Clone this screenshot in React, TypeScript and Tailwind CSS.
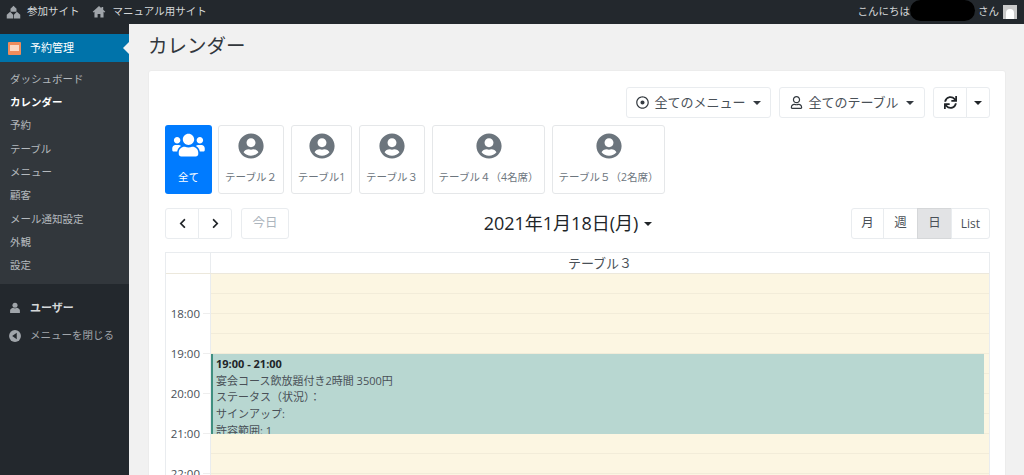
import { FaChevronLeft, FaChevronRight, FaRegDotCircle, FaRegUser, FaSync, FaUserCircle, FaUsers } from "react-icons/fa";

const font = "font-['Open_Sans','Noto_Sans_CJK_JP',sans-serif]";

const subMenu = ["ダッシュボード", "カレンダー", "予約", "テーブル", "メニュー", "顧客", "メール通知設定", "外観", "設定"];

const tables = [
  { label: "テーブル２", width: "w-[66px]" },
  { label: "テーブル1", width: "w-[61px]" },
  { label: "テーブル３", width: "w-[66px]" },
  { label: "テーブル４（4名席）", width: "w-[113px]" },
  { label: "テーブル５（2名席）", width: "w-[113px]" },
];

const hours = ["", "", "18:00", "", "19:00", "", "20:00", "", "21:00", "", "22:00"];

function HomeIcon({ className }: { className: string }) {
  return (
    <svg viewBox="0 0 20 20" fill="currentColor" className={className}>
      <path d="M10 1.500 1 9.500l1 1.200 1.500-1.200V18h4.500v-5h4v5h4.500V9.500l1.500 1.200 1-1.200-3-2.700V3h-2.500v1.600z" />
    </svg>
  );
}

function SitesIcon({ className }: { className: string }) {
  return (
    <svg viewBox="0 0 20 20" fill="currentColor" className={className}>
      <path d="M10 1 6 5v4h8V5z" />
      <path d="M5.500 9 1 13v5h8.500v-5zM14.500 9 10.500 13v5H19v-5z" />
    </svg>
  );
}

function CollapseIcon({ className }: { className: string }) {
  return (
    <svg viewBox="0 0 20 20" className={className}>
      <circle cx="10" cy="10" r="8.500" fill="currentColor" />
      <path d="M12.500 5.500v9L6 10z" fill="#23282d" />
    </svg>
  );
}

function WpUserIcon({ className }: { className: string }) {
  return (
    <svg viewBox="0 0 20 20" fill="currentColor" className={className}>
      <circle cx="10" cy="6" r="3.600" />
      <path d="M3 17v-3.500C3 11 5.500 10 7.500 9.500c1.500 1 3.500 1 5 0 2 .5 4.500 1.500 4.500 4V17z" />
    </svg>
  );
}

function Caret({ className = "" }: { className?: string }) {
  return <span className={`inline-block border-x-[4px] border-t-[4px] border-x-transparent border-t-current ${className}`} />;
}

function Sidebar() {
  return (
    <aside className="w-[129px] shrink-0 bg-[#23282d] pt-[10px] text-[#b4b9be]">
      <div className="relative flex h-[28px] items-center gap-[9px] bg-[#0073aa] pl-[8px] text-[11px] text-white">
        <span className="flex h-[13px] w-[13px] items-center justify-center rounded-[1px] bg-[#ee8c5c]">
          <span className="h-[6px] w-[9px] bg-[#fbd9c4]" />
        </span>
        予約管理
        <span className="absolute right-0 top-[8px] border-y-[6px] border-r-[6px] border-y-transparent border-r-[#f1f1f1]" />
      </div>
      <ul className="flex h-[222px] flex-col bg-[#32373c] pl-[10px] pt-[6px] text-[10.500px]">
        {subMenu.map((item) => (
          <li key={item} className={`flex h-[23.300px] items-center ${item === "カレンダー" ? "font-bold text-white" : ""}`}>
            {item}
          </li>
        ))}
      </ul>
      <div className="mt-[13px] flex h-[22px] items-center gap-[8px] pl-[8px] text-[11px] font-bold text-[#d5d8da]">
        <WpUserIcon className="h-[14px] w-[14px] text-[#a0a5aa]" />
        ユーザー
      </div>
      <div className="mt-[6px] flex h-[22px] items-center gap-[8px] pl-[8px] text-[10.500px] text-[#a0a5aa]">
        <CollapseIcon className="h-[14px] w-[14px]" />
        メニューを閉じる
      </div>
    </aside>
  );
}

function Toolbar() {
  const btn = "flex h-[31px] items-center justify-center rounded-[3px] border border-[#e9ecef] bg-white text-[#495057]";
  return (
    <div className="flex justify-end gap-[8px] pr-[15px]">
      <button className={`${btn} w-[145px] gap-[5px] text-[13px]`}>
        <FaRegDotCircle className="h-[13px] w-[13px] text-[#343a40]" />
        全てのメニュー
        <Caret className="ml-[2px] text-[#343a40]" />
      </button>
      <button className={`${btn} w-[146px] gap-[5px] text-[13px]`}>
        <FaRegUser className="h-[13px] w-[13px] text-[#343a40]" />
        全てのテーブル
        <Caret className="ml-[2px] text-[#343a40]" />
      </button>
      <div className="flex">
        <button className={`${btn} w-[34px] rounded-r-none`}>
          <FaSync className="h-[13px] w-[13px] text-[#212529]" />
        </button>
        <button className={`${btn} -ml-px w-[24px] rounded-l-none`}>
          <Caret className="text-[#212529]" />
        </button>
      </div>
    </div>
  );
}

function TableTabs() {
  return (
    <div className="mt-[7px] flex gap-[6px] pl-[16px]">
      <div className="flex h-[69px] w-[47px] flex-col items-center rounded-[3px] bg-[#007bff] pt-[7px] text-[10.500px] text-white">
        <FaUsers className="h-[26px] w-[33px]" />
        <span className="mt-[11px] leading-[16px]">全て</span>
      </div>
      {tables.map((t) => (
        <div key={t.label} className={`mr-px flex h-[69px] ${t.width} flex-col items-center rounded-[3px] border border-[#e5e7e9] bg-white pt-[7px] text-[10.500px] text-[#6c757d]`}>
          <FaUserCircle className="h-[26px] w-[26px]" />
          <span className="mt-[10px] whitespace-nowrap leading-[16px]">{t.label}</span>
        </div>
      ))}
    </div>
  );
}

function CalendarHeader() {
  const btn = "flex h-[31px] items-center justify-center border";
  return (
    <div className="mt-[14px] flex items-center justify-between pl-[16px] pr-[15px]">
      <div className="flex w-[124px] items-center">
        <button className={`${btn} w-[34px] rounded-l-[3px] border-[#e9ecef] bg-white text-[#212529]`}>
          <FaChevronLeft className="h-[11px] w-[11px]" />
        </button>
        <button className={`${btn} -ml-px w-[34px] rounded-r-[3px] border-[#e9ecef] bg-white text-[#212529]`}>
          <FaChevronRight className="h-[11px] w-[11px]" />
        </button>
        <button className={`${btn} ml-[9px] w-[48px] shrink-0 rounded-[3px] border-[#e9ecef] bg-white text-[12.500px] text-[#adb5bd]`}>今日</button>
      </div>
      <div className="mr-[4px] flex items-center gap-[6px] text-[18px] leading-[31px] text-[#212529]">
        2021年1月18日(月)
        <Caret />
      </div>
      <div className="flex">
        <button className={`${btn} w-[33px] rounded-l-[3px] border-[#e9ecef] bg-white text-[12.500px] text-[#495057]`}>月</button>
        <button className={`${btn} -ml-px w-[35px] border-[#e9ecef] bg-white text-[12.500px] text-[#495057]`}>週</button>
        <button className={`${btn} -ml-px w-[35px] border-[#d5d7d9] bg-[#e2e3e5] text-[12.500px] text-[#495057]`}>日</button>
        <button className={`${btn} -ml-px w-[39px] rounded-r-[3px] border-[#e9ecef] bg-white text-[12px] text-[#495057]`}>List</button>
      </div>
    </div>
  );
}

function TimeGrid() {
  return (
    <div className="ml-[16px] mr-[15px] mt-[13px] border-x border-t border-[#e9ecef]">
      <div className="flex h-[21px] border-b border-[#ece8dc]">
        <div className="w-[45px] border-r border-[#e9ecef]" />
        <div className="flex-1 text-center text-[13px] leading-[20px] text-[#495057]">テーブル３</div>
      </div>
      <div className="relative">
        {hours.map((label, i) => (
          <div key={i} className="flex h-[20px]">
            <div className="relative w-[45px] border-r border-[#e9ecef]">
              {label && (
                <>
                  <span className="absolute right-[10px] top-[-10px] text-[11.500px] leading-[20px] text-[#495057]">{label}</span>
                  <span className="absolute right-0 top-[-1px] h-px w-[7px] bg-[#eeeeee]" />
                </>
              )}
            </div>
            <div className="flex-1 border-b border-[#f2ecd9] bg-[#fcf6e2]" />
          </div>
        ))}
        <div className="absolute left-[45px] right-[5px] top-[80px] h-[80px] overflow-hidden border-l-[2px] border-[#3f8f7f] bg-[#b8d7d1] pl-[3px] pt-[2px] text-[11px] leading-[16.700px] text-[#495057]">
          <div className="font-bold text-[#212529]">19:00 - 21:00</div>
          <div>宴会コース飲放題付き2時間 3500円</div>
          <div>ステータス（状況）：</div>
          <div>サインアップ:</div>
          <div>許容範囲: 1</div>
        </div>
      </div>
    </div>
  );
}

export default function App() {
  return (
    <div className={`flex h-screen flex-col overflow-hidden bg-[#f1f1f1] ${font}`}>
      <header className="flex h-[24px] shrink-0 items-center bg-[#23282d] pl-[6px] pr-[7px] text-[10.500px] text-[#d5d8da]">
        <SitesIcon className="h-[15px] w-[15px] text-[#a0a5aa]" />
        <span className="ml-[6px]">参加サイト</span>
        <HomeIcon className="ml-[12px] h-[14px] w-[14px] text-[#a0a5aa]" />
        <span className="ml-[7px]">マニュアル用サイト</span>
        <div className="ml-auto flex h-full items-center">
          <span>こんにちは</span>
          <span className="h-[21px] w-[65px] self-start rounded-full bg-black" />
          <span className="ml-[3px]">さん</span>
          <span className="ml-[4px] flex h-[14px] w-[14px] items-end justify-center bg-[#c9c9c9]">
            <span className="h-[10px] w-[8px] rounded-t-full bg-white" />
          </span>
        </div>
      </header>
      <div className="flex min-h-0 flex-1">
        <Sidebar />
        <main className="min-w-0 flex-1 pl-[19px] pr-[18px]">
          <h1 className="h-[46px] pt-[6px] text-[19.500px] leading-[32px] text-[#32373c]">カレンダー</h1>
          <section className="h-[500px] rounded-[3px] border border-[#ececec] bg-white pt-[16px]">
            <Toolbar />
            <TableTabs />
            <CalendarHeader />
            <TimeGrid />
          </section>
        </main>
      </div>
    </div>
  );
}
